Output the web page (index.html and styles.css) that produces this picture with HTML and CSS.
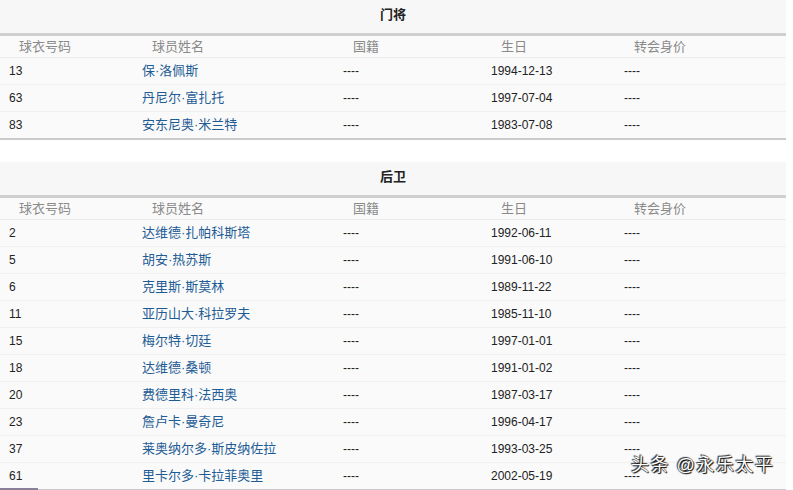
FILE: index.html
```html
<!DOCTYPE html>
<html lang="zh">
<head>
<meta charset="utf-8">
<link rel="stylesheet" href="styles.css">
</head>
<body>
<div class="page">
  <section class="squad">
    <div class="title">门将</div>
    <table class="roster">
      <thead>
        <tr><th class="c1">球衣号码</th><th class="c2">球员姓名</th><th class="c3">国籍</th><th class="c4">生日</th><th class="c5">转会身价</th></tr>
      </thead>
      <tbody>
        <tr><td>13</td><td><a>保·洛佩斯</a></td><td>----</td><td>1994-12-13</td><td>----</td></tr>
        <tr><td>63</td><td><a>丹尼尔·富扎托</a></td><td>----</td><td>1997-07-04</td><td>----</td></tr>
        <tr><td>83</td><td><a>安东尼奥·米兰特</a></td><td>----</td><td>1983-07-08</td><td>----</td></tr>
      </tbody>
    </table>
  </section>
  <section class="squad second">
    <div class="title">后卫</div>
    <table class="roster">
      <thead>
        <tr><th class="c1">球衣号码</th><th class="c2">球员姓名</th><th class="c3">国籍</th><th class="c4">生日</th><th class="c5">转会身价</th></tr>
      </thead>
      <tbody>
        <tr><td>2</td><td><a>达维德·扎帕科斯塔</a></td><td>----</td><td>1992-06-11</td><td>----</td></tr>
        <tr><td>5</td><td><a>胡安·热苏斯</a></td><td>----</td><td>1991-06-10</td><td>----</td></tr>
        <tr><td>6</td><td><a>克里斯·斯莫林</a></td><td>----</td><td>1989-11-22</td><td>----</td></tr>
        <tr><td>11</td><td><a>亚历山大·科拉罗夫</a></td><td>----</td><td>1985-11-10</td><td>----</td></tr>
        <tr><td>15</td><td><a>梅尔特·切廷</a></td><td>----</td><td>1997-01-01</td><td>----</td></tr>
        <tr><td>18</td><td><a>达维德·桑顿</a></td><td>----</td><td>1991-01-02</td><td>----</td></tr>
        <tr><td>20</td><td><a>费德里科·法西奥</a></td><td>----</td><td>1987-03-17</td><td>----</td></tr>
        <tr><td>23</td><td><a>詹卢卡·曼奇尼</a></td><td>----</td><td>1996-04-17</td><td>----</td></tr>
        <tr><td>37</td><td><a>莱奥纳尔多·斯皮纳佐拉</a></td><td>----</td><td>1993-03-25</td><td>----</td></tr>
        <tr><td>61</td><td><a>里卡尔多·卡拉菲奥里</a></td><td>----</td><td>2002-05-19</td><td>----</td></tr>
      </tbody>
    </table>
  </section>
  <div class="watermark">头条 @永乐太平</div>
  <div class="strip"></div>
</div>
</body>
</html>
```
FILE: styles.css
```css
html, body {
  margin: 0;
  padding: 0;
  background: #ffffff;
}
body {
  font-family: "Liberation Sans", "Noto Sans CJK SC", sans-serif;
  font-size: 12px;
  line-height: 16px;
  color: #333;
}
.page {
  position: relative;
  width: 793px;
  height: 490px;
  overflow: hidden;
}
.squad {
  width: 786px;
  background: #fafafa;
}
.second {
  margin-top: 22px;
}
.title {
  height: 33px;
  line-height: 30px;
  text-align: center;
  font-weight: bold;
  font-size: 13px;
  color: #222;
  background: #f7f7f7;
  border-bottom: 3px solid #cfcfcf;
}
.roster {
  width: 100%;
  border-collapse: collapse;
  table-layout: fixed;
  border-bottom: 2px solid #cacaca;
}
.roster th {
  height: 21px;
  padding: 0 0 0 19px;
  line-height: 16px;
  text-align: left;
  vertical-align: middle;
  font-weight: normal;
  font-size: 13px;
  color: #8a8a8a;
  border-bottom: 1px solid #ececec;
  background: #fafafa;
}
.c1 { width: 114px; }
.c2 { width: 182px; }
.c3 { width: 129px; }
.c4 { width: 114px; }
.roster td {
  height: 26px;
  padding: 0 0 0 9px;
  line-height: 16px;
  text-align: left;
  vertical-align: middle;
  font-size: 12px;
  color: #222;
  border-bottom: 1px solid #f0f0f0;
  white-space: nowrap;
}
.roster tbody tr:last-child td {
  border-bottom: none;
}
.roster a {
  color: #1e5c96;
  font-size: 13px;
  line-height: 16px;
  text-decoration: none;
}
.watermark {
  position: absolute;
  left: 631px;
  top: 453px;
  font-size: 18px;
  line-height: 24px;
  color: #ffffff;
  letter-spacing: 1.5px;
  text-shadow: 0 0 1px #000, 1px 1px 1px #000, -1px -1px 1px #333;
}
.strip {
  position: absolute;
  left: 0;
  top: 488px;
  width: 38px;
  height: 2px;
  background: #8a7f9a;
}
```
